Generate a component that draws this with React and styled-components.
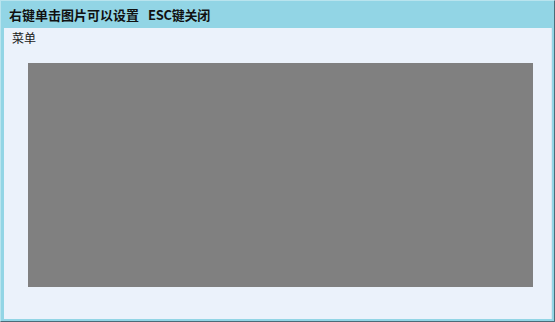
import React from 'react';
import styled, { createGlobalStyle } from 'styled-components';

const GlobalStyle = createGlobalStyle`
  html, body {
    margin: 0;
    padding: 0;
    background: #ffffff;
  }
  body {
    font-family: "Microsoft YaHei", "Noto Sans CJK SC", "Noto Sans", sans-serif;
  }
`;

const Window = styled.div`
  box-sizing: border-box;
  width: 555px;
  height: 322px;
  display: flex;
  flex-direction: column;
  background: #92d5e5;
  border-top: 1px solid #b9e4ee;
  border-left: 1px solid #b9e4ee;
  border-right: 1px solid #4b6b78;
  border-bottom: 1px solid #4b6b78;
  padding: 0 2px 2px 3px;
`;

const TitleBar = styled.div`
  height: 27px;
  display: flex;
  align-items: center;
  padding-left: 5px;
  gap: 9px;
  font-size: 13px;
  font-weight: 700;
  color: #111111;
  flex-shrink: 0;
`;

const Latin = styled.span`
  letter-spacing: -0.3px;
`;

const Client = styled.div`
  flex: 1;
  display: flex;
  flex-direction: column;
  background: #ebf2fb;
  border-right: 1px solid #dbe7f2;
`;

const MenuBar = styled.div`
  height: 18px;
  display: flex;
  align-items: center;
  padding: 0 0 0 8px;
  font-size: 12px;
  color: #1a1a1a;
`;

const Stage = styled.div`
  flex: 1;
  padding: 17px 18px 32px 24px;
  display: flex;
`;

const Picture = styled.div`
  flex: 1;
  background: #808080;
`;

export default function App() {
  return (
    <>
      <GlobalStyle />
      <Window>
        <TitleBar>
          <span>右键单击图片可以设置</span>
          <Latin>ESC键关闭</Latin>
        </TitleBar>
        <Client>
          <MenuBar>菜单</MenuBar>
          <Stage>
            <Picture />
          </Stage>
        </Client>
      </Window>
    </>
  );
}
